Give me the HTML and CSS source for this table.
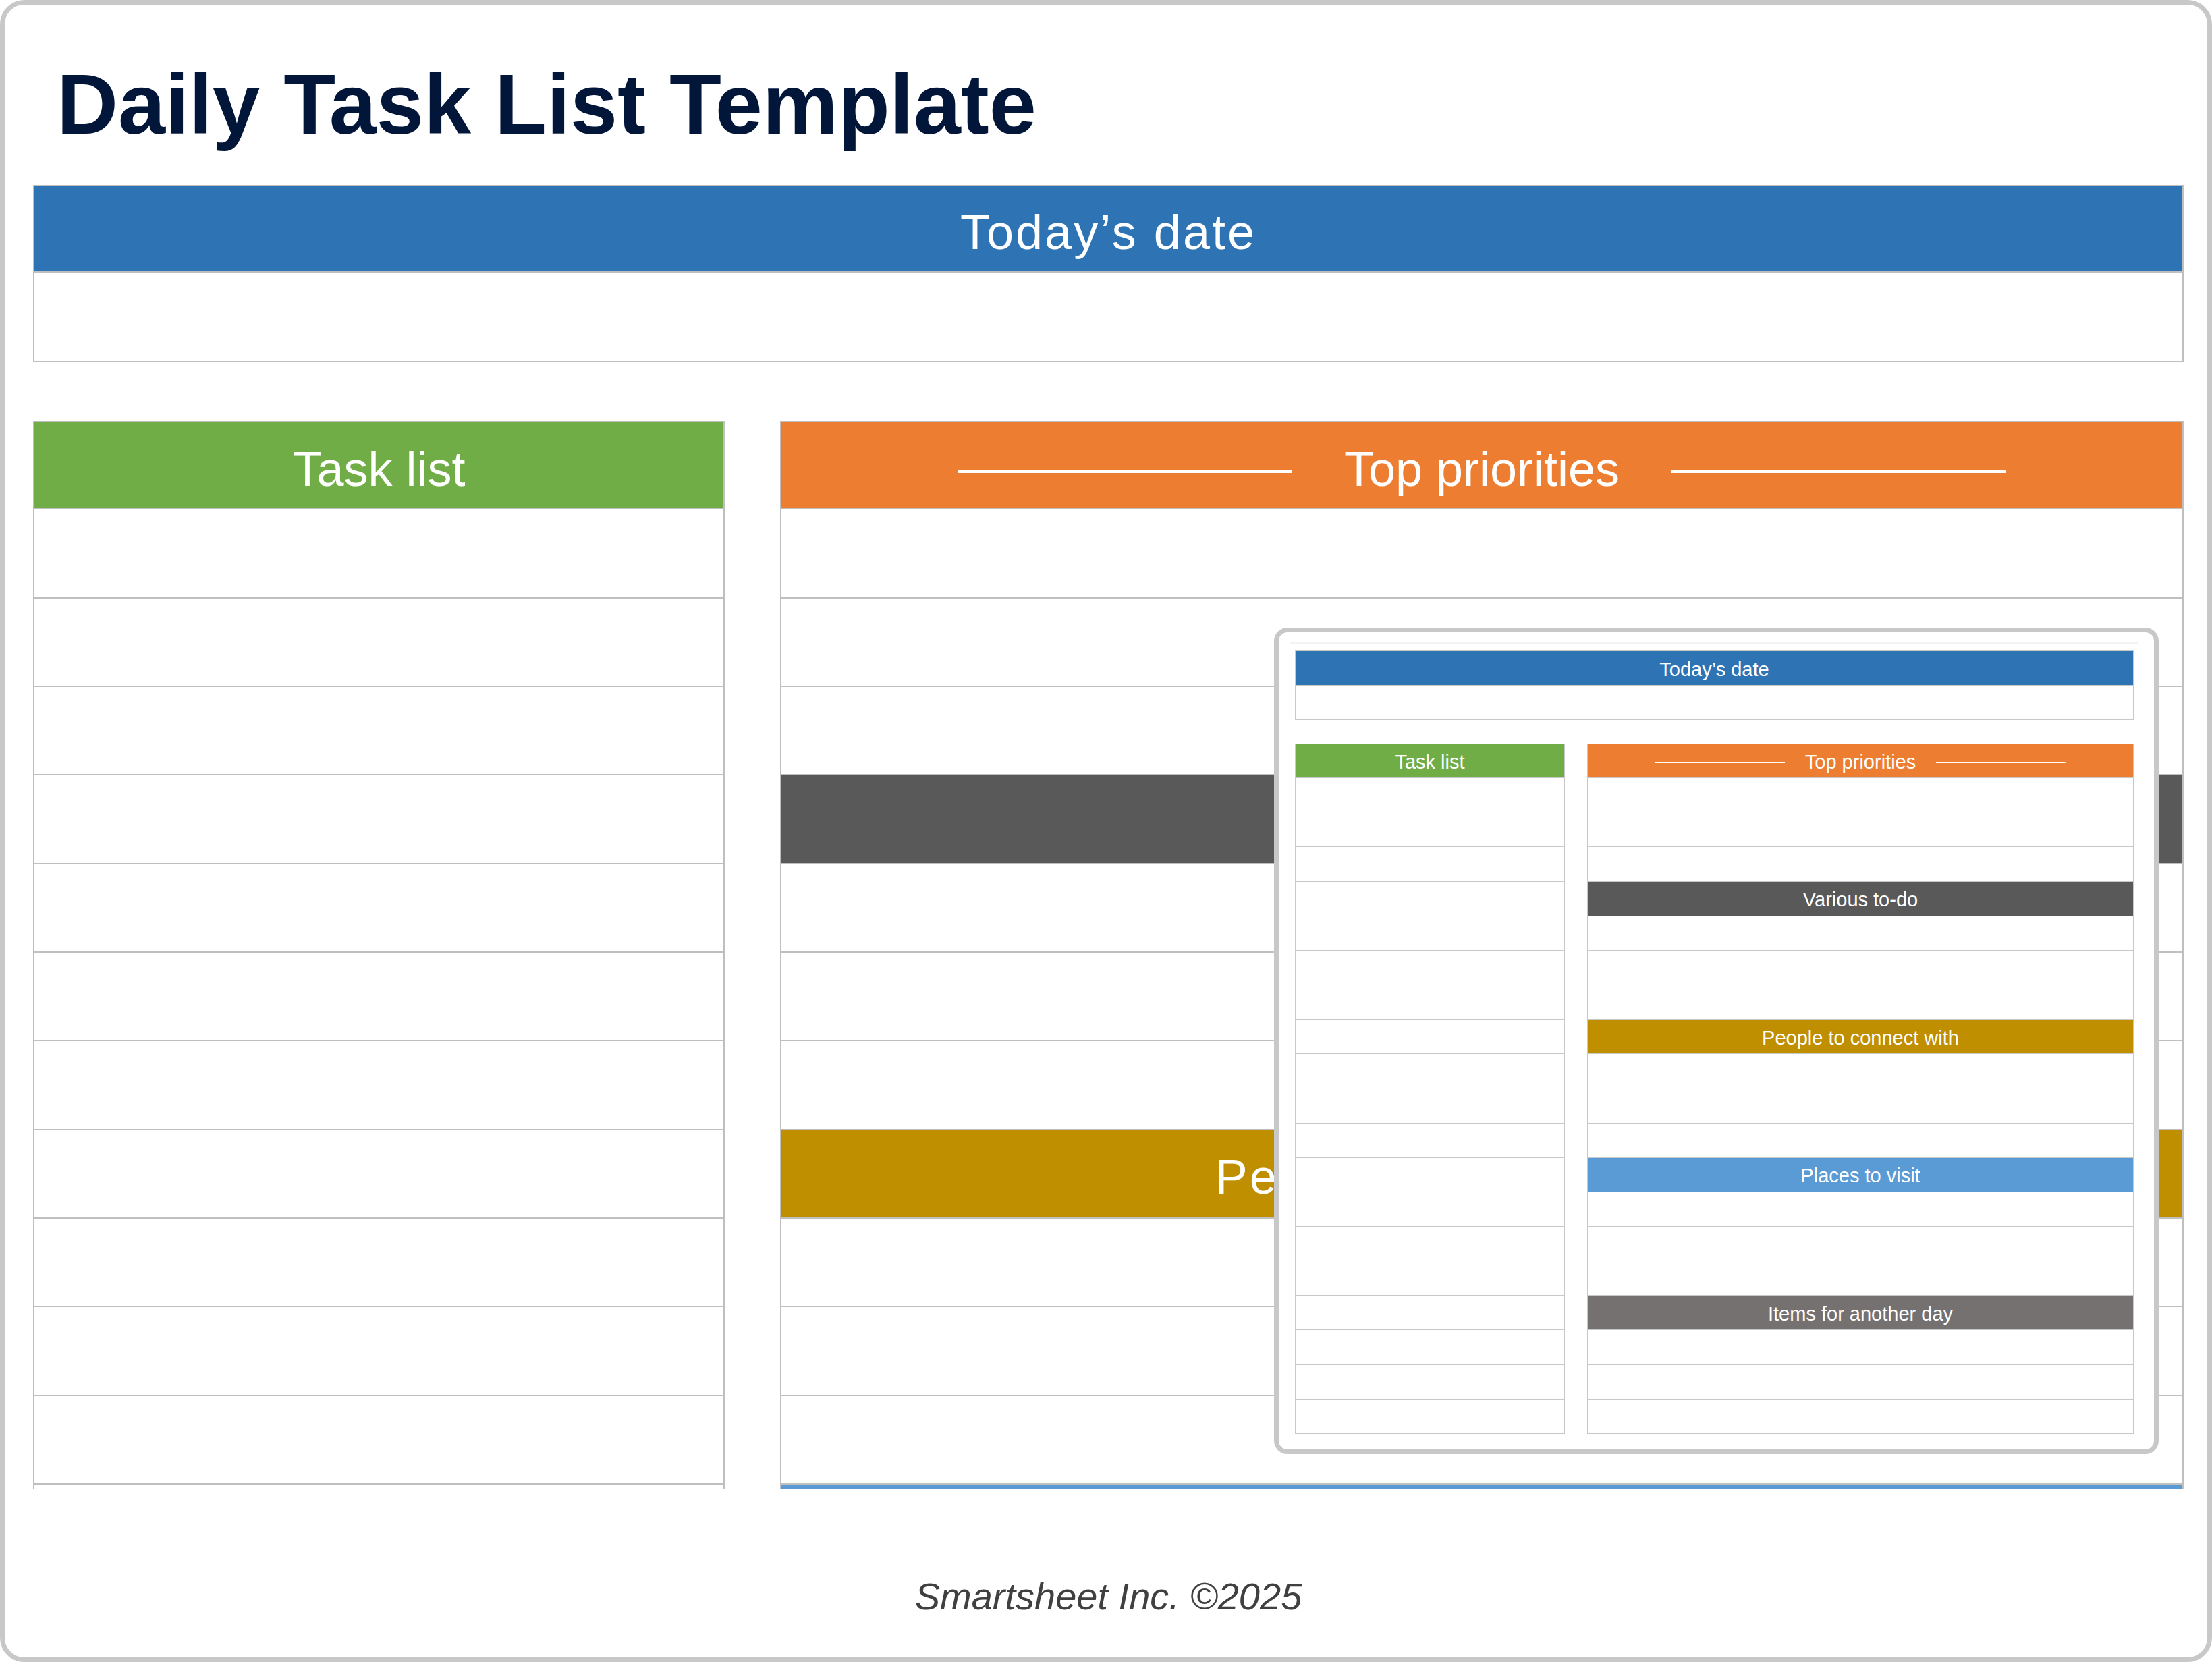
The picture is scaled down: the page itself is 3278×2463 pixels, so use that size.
FILE: index.html
```html
<!DOCTYPE html>
<html lang="en">
<head>
<meta charset="utf-8">
<title>Daily Task List Template</title>
<link rel="stylesheet" href="styles.css">
</head>
<body>
<div class="frame">
  <h1 class="title">Daily Task List Template</h1>

  <div class="sheet sheet--main">
    <div class="date-head">Today’s date</div>
    <div class="date-box"></div>
    <div class="cols">
      <div class="col">
        <div class="cell head green">Task list</div>
        <div class="cell"></div><div class="cell"></div><div class="cell"></div><div class="cell"></div>
        <div class="cell"></div><div class="cell"></div><div class="cell"></div><div class="cell"></div>
        <div class="cell"></div><div class="cell"></div><div class="cell"></div><div class="cell"></div>
        <div class="cell"></div><div class="cell"></div><div class="cell"></div><div class="cell"></div>
        <div class="cell"></div><div class="cell"></div><div class="cell"></div>
      </div>
      <div class="col">
        <div class="cell head orange lined">Top priorities</div>
        <div class="cell"></div><div class="cell"></div><div class="cell"></div>
        <div class="cell head charcoal">Various to-do</div>
        <div class="cell"></div><div class="cell"></div><div class="cell"></div>
        <div class="cell head gold">People to connect with</div>
        <div class="cell"></div><div class="cell"></div><div class="cell"></div>
        <div class="cell head sky">Places to visit</div>
        <div class="cell"></div><div class="cell"></div><div class="cell"></div>
        <div class="cell head taupe">Items for another day</div>
        <div class="cell"></div><div class="cell"></div><div class="cell"></div>
      </div>
    </div>
  </div>

  <p class="footer">Smartsheet Inc. ©2025</p>

  <div class="preview">
    <div class="sheet sheet--mini">
      <div class="date-head">Today’s date</div>
      <div class="date-box"></div>
      <div class="cols">
        <div class="col">
          <div class="cell head green">Task list</div>
          <div class="cell"></div><div class="cell"></div><div class="cell"></div><div class="cell"></div>
          <div class="cell"></div><div class="cell"></div><div class="cell"></div><div class="cell"></div>
          <div class="cell"></div><div class="cell"></div><div class="cell"></div><div class="cell"></div>
          <div class="cell"></div><div class="cell"></div><div class="cell"></div><div class="cell"></div>
          <div class="cell"></div><div class="cell"></div><div class="cell"></div>
        </div>
        <div class="col">
          <div class="cell head orange lined">Top priorities</div>
          <div class="cell"></div><div class="cell"></div><div class="cell"></div>
          <div class="cell head charcoal">Various to-do</div>
          <div class="cell"></div><div class="cell"></div><div class="cell"></div>
          <div class="cell head gold">People to connect with</div>
          <div class="cell"></div><div class="cell"></div><div class="cell"></div>
          <div class="cell head sky">Places to visit</div>
          <div class="cell"></div><div class="cell"></div><div class="cell"></div>
          <div class="cell head taupe">Items for another day</div>
          <div class="cell"></div><div class="cell"></div><div class="cell"></div>
        </div>
      </div>
    </div>
  </div>
</div>
</body>
</html>
```

FILE: styles.css
```css
html, body {
  margin: 0;
  padding: 0;
  background: #ffffff;
}

.frame {
  position: relative;
  width: 3278px;
  height: 2463px;
  box-sizing: border-box;
  border: 7px solid #c8c8c8;
  border-radius: 36px;
  padding: 85px 35px 0 42px;
  background: #ffffff;
  overflow: hidden;
  font-family: "Liberation Sans", Arial, sans-serif;
}

.title {
  margin: 0 0 56px 35px;
  height: 126px;
  font-family: "Liberation Sans", Arial, sans-serif;
  font-weight: 700;
  font-size: 126px;
  line-height: 1;
  letter-spacing: 0;
  color: #02163a;
  white-space: nowrap;
}

/* ---------- shared sheet structure ---------- */
.sheet {
  --u: 131.33px;
  --b: 2px;
  --dh: 130px;
  --db: 133px;
  --dgap: 87px;
  --left: 1025px;
  --right: 2080px;
  --cgap: 82px;
  --fs: 72px;
  --tp: 10px;
  --ls: 3px;
  --lw: 495px;
  --lg: 77px;
  --lt: 5px;
  --lo: 7px;
  --line: #bfbfbf;
}

.sheet--mini {
  --u: 51.15px;
  --b: 1px;
  --dh: 52px;
  --db: 51px;
  --dgap: 35px;
  --left: 400px;
  --right: 810px;
  --cgap: 33px;
  --fs: 29px;
  --tp: 4px;
  --ls: 0px;
  --lw: 192px;
  --lg: 30px;
  --lt: 2px;
  --lo: 0px;
  --line: #c8c8c8;
  width: 1243px;
}

.sheet--main {
  width: 3187px;
}

.date-head {
  box-sizing: border-box;
  height: var(--dh);
  border: var(--b) solid var(--line);
  background: #2e74b5;
  color: #ffffff;
  font-size: var(--fs);
  line-height: 1;
  letter-spacing: var(--ls);
  padding-top: var(--tp);
  display: flex;
  align-items: center;
  justify-content: center;
  white-space: nowrap;
}

.date-box {
  box-sizing: border-box;
  height: var(--db);
  border: var(--b) solid var(--line);
  border-top: none;
  background: #ffffff;
}

.cols {
  margin-top: var(--dgap);
  display: grid;
  grid-template-columns: var(--left) var(--right);
  column-gap: var(--cgap);
  align-items: start;
}

.sheet--main .cols {
  height: 1582px;
  overflow: hidden;
}

.col {
  display: flex;
  flex-direction: column;
}

.cell {
  box-sizing: border-box;
  height: var(--u);
  flex: 0 0 var(--u);
  border-left: var(--b) solid var(--line);
  border-right: var(--b) solid var(--line);
  border-bottom: var(--b) solid var(--line);
  background: #ffffff;
}

.cell:first-child {
  border-top: var(--b) solid var(--line);
}

.head {
  display: flex;
  align-items: center;
  justify-content: center;
  padding-top: var(--tp);
  color: #ffffff;
  font-size: var(--fs);
  line-height: 1;
  white-space: nowrap;
}

.gold,
.charcoal,
.sky,
.taupe {
  letter-spacing: var(--ls);
}

.lined {
  gap: var(--lg);
}

.lined::before,
.lined::after {
  content: "";
  flex: 0 0 var(--lw);
  height: var(--lt);
  margin-top: var(--lo);
  background: #ffffff;
}

.green { background: #70ad47; }
.orange { background: #ed7d31; }
.charcoal { background: #595959; }
.gold { background: #bf8f00; }
.sky { background: #5b9bd5; }
.taupe { background: #767171; }

/* ---------- footer ---------- */
.footer {
  margin: 132px 0 0;
  text-align: center;
  font-family: "Liberation Sans", Arial, sans-serif;
  font-style: italic;
  font-size: 56px;
  line-height: 1;
  color: #404040;
}

/* ---------- preview overlay ---------- */
.preview {
  position: absolute;
  left: 1881px;
  top: 923px;
  width: 1311px;
  height: 1225px;
  box-sizing: border-box;
  border: 7px solid #c8c8c8;
  border-radius: 20px;
  background: #ffffff;
  padding: 27px 0 0 24px;
}

.preview::before {
  content: "";
  position: absolute;
  left: 17px;
  right: 24px;
  top: 15px;
  height: 3px;
  background: #f3f3f3;
}
```
